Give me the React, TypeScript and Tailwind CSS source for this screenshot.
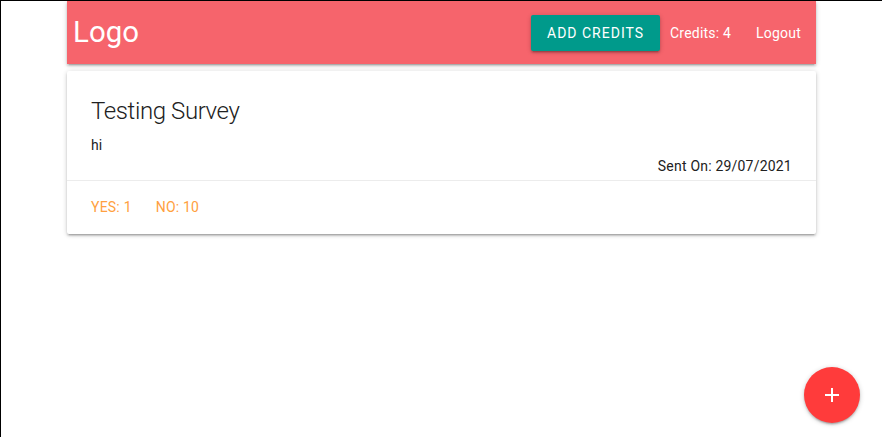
import React from 'react';

type Survey = {
  title: string;
  body: string;
  yes: number;
  no: number;
  dateSent: string;
};

const surveys: Survey[] = [
  { title: 'Testing Survey', body: 'hi', yes: 1, no: 10, dateSent: '29/07/2021' },
];

const Header: React.FC<{ credits: number }> = ({ credits }) => {
  return (
    <nav className="h-[63px] bg-[#f6646c] text-white shadow-[0_2px_2px_0_rgba(0,0,0,0.14),0_3px_1px_-2px_rgba(0,0,0,0.12),0_1px_5px_0_rgba(0,0,0,0.2)]">
      <div className="flex h-full items-center justify-between">
        <a href="#" className="pl-[6px] text-[29.4px] leading-none">
          Logo
        </a>
        <ul className="flex items-center text-sm tracking-[0.2px]">
          <li>
            <button className="h-9 rounded-[2px] bg-[#009a8b] px-4 text-sm uppercase tracking-[1px] text-white shadow-[0_2px_2px_0_rgba(0,0,0,0.14),0_3px_1px_-2px_rgba(0,0,0,0.12),0_1px_5px_0_rgba(0,0,0,0.2)]">
              Add Credits
            </button>
          </li>
          <li className="mx-[10px]">Credits: {credits}</li>
          <li>
            <a href="#" className="px-[15px]">
              Logout
            </a>
          </li>
        </ul>
      </div>
    </nav>
  );
};

const SurveyCard: React.FC<{ survey: Survey }> = ({ survey }) => {
  return (
    <div className="mt-[7px] mb-[14px] rounded-[2px] bg-white shadow-[0_2px_2px_0_rgba(0,0,0,0.14),0_3px_1px_-2px_rgba(0,0,0,0.12),0_1px_5px_0_rgba(0,0,0,0.2)]">
      <div className="p-6">
        <span className="mb-2 block text-2xl leading-8 font-light tracking-[-0.4px]">{survey.title}</span>
        <p className="text-sm leading-[21px]">{survey.body}</p>
        <p className="float-right text-sm leading-[21px] tracking-[0.2px]">Sent On: {survey.dateSent}</p>
      </div>
      <div className="border-t border-[rgba(160,160,160,0.2)] px-6 py-4 text-sm leading-[21px] tracking-[0.2px]">
        <a href="#" className="mr-6 uppercase text-[#ffa040]">
          Yes: {survey.yes}
        </a>
        <a href="#" className="mr-6 uppercase text-[#ffa040]">
          No: {survey.no}
        </a>
      </div>
    </div>
  );
};

export default function App() {
  return (
    <div className="min-h-screen border-t border-l border-black bg-white font-['Roboto',sans-serif] text-[#212121]">
      <div className="mx-auto w-[85%]">
        <Header credits={4} />
        {surveys.map((s) => (
          <SurveyCard key={s.title} survey={s} />
        ))}
      </div>
      <a
        href="#"
        className="fixed right-[22px] bottom-[14px] flex h-14 w-14 items-center justify-center rounded-full bg-[#ff3b3b] shadow-[0_2px_2px_0_rgba(0,0,0,0.14),0_3px_1px_-2px_rgba(0,0,0,0.12),0_1px_5px_0_rgba(0,0,0,0.2)]"
      >
        <svg width="24" height="24" viewBox="0 0 24 24" fill="white">
          <path d="M19 13h-6v6h-2v-6H5v-2h6V5h2v6h6v2z" />
        </svg>
      </a>
    </div>
  );
}
